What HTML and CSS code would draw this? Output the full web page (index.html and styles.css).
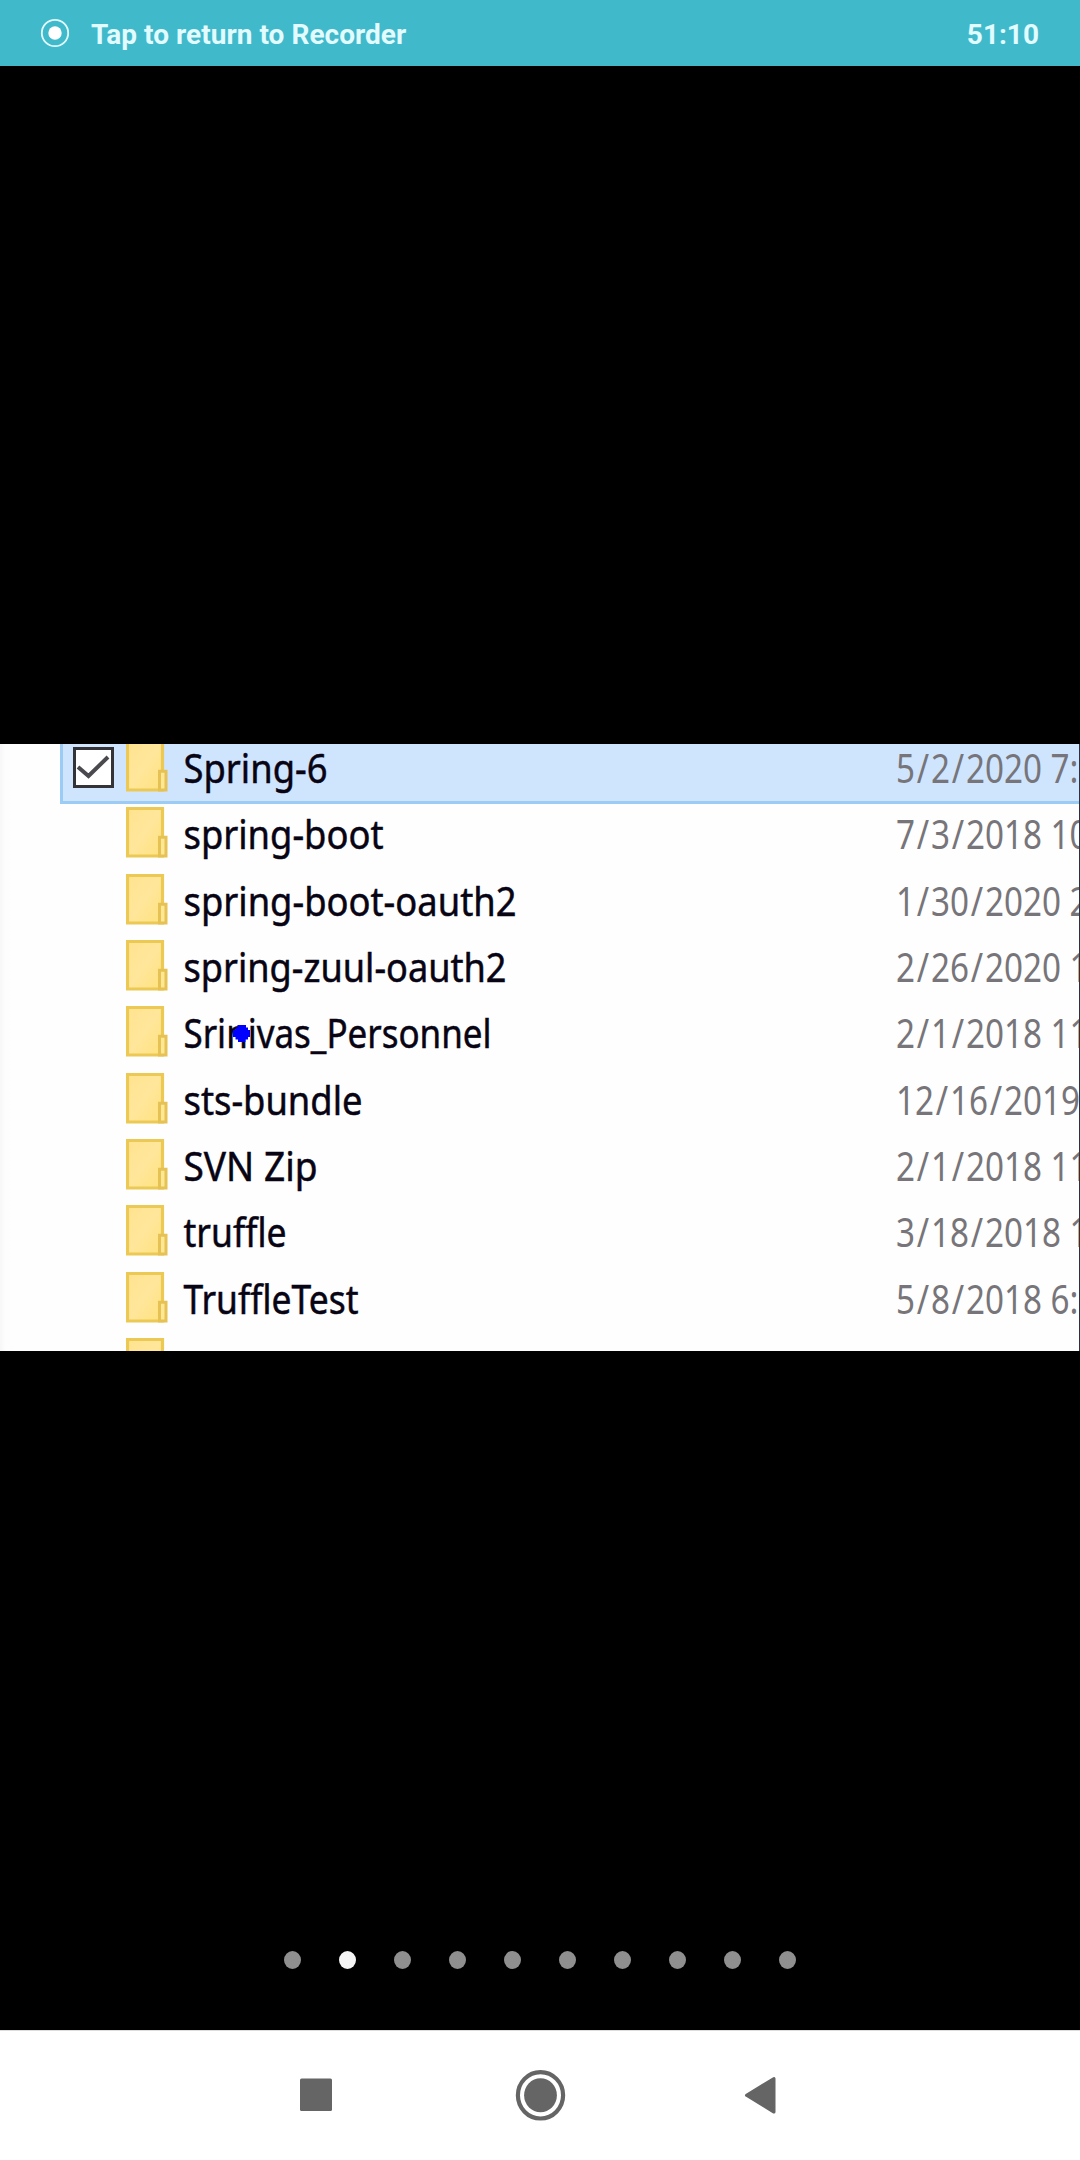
FILE: index.html
```html
<!DOCTYPE html>
<html lang="en">
<head>
<meta charset="utf-8">
<title>Recorder</title>
<link rel="stylesheet" href="styles.css">
</head>
<body>
<svg width="0" height="0" class="defs">
  <defs>
    <linearGradient id="paper" x1="0" y1="0" x2="1" y2="1"><stop offset="0" stop-color="#ffe390"/><stop offset=".5" stop-color="#ffe69a"/><stop offset="1" stop-color="#ffe27e"/></linearGradient>
    <symbol id="folder" viewBox="0 0 42 51">
      <path d="M1.500 1.500H36.500V49H1.500Z" fill="url(#paper)" stroke="#ebc954" stroke-width="3.200"/>
      <path d="M33.500 49V30.200H40V49Z" fill="#ffe794" stroke="#e6c154" stroke-width="3"/>
    </symbol>
  </defs>
</svg>
<header class="status">
  <svg class="rec" viewBox="0 0 30 30"><circle cx="15" cy="15" r="13.2" fill="none" stroke="#e2fbff" stroke-width="1.8"/><circle cx="15" cy="15" r="6.7" fill="#fff"/></svg>
  <span class="label">Tap to return to Recorder</span>
  <span class="time">51:10</span>
</header>
<main class="stage">
  <section class="photo">
    <div class="row selected">
      <svg class="check" viewBox="0 0 41 41"><rect x="1.5" y="1.5" width="38" height="38" fill="#fff" stroke="#333338" stroke-width="3"/><path d="M5 20L15.500 29L35 10" fill="none" stroke="#4a4a4e" stroke-width="4"/></svg>
      <svg class="folder"><use href="#folder"/></svg>
      <svg class="name"><text x="0" y="41" textLength="144" lengthAdjust="spacingAndGlyphs">Spring-6</text></svg>
      <span class="date">5<i>/</i>2<i>/</i>2020 7:</span>
    </div>
    <div class="row"><svg class="folder"><use href="#folder"/></svg><svg class="name"><text x="0" y="41" textLength="200" lengthAdjust="spacingAndGlyphs">spring-boot</text></svg><span class="date">7<i>/</i>3<i>/</i>2018 10</span></div>
    <div class="row"><svg class="folder"><use href="#folder"/></svg><svg class="name"><text x="0" y="41" textLength="333" lengthAdjust="spacingAndGlyphs">spring-boot-oauth2</text></svg><span class="date">1<i>/</i>30<i>/</i>2020 2</span></div>
    <div class="row"><svg class="folder"><use href="#folder"/></svg><svg class="name"><text x="0" y="41" textLength="323" lengthAdjust="spacingAndGlyphs">spring-zuul-oauth2</text></svg><span class="date">2<i>/</i>26<i>/</i>2020 1</span></div>
    <div class="row"><svg class="folder"><use href="#folder"/></svg><svg class="name"><text x="0" y="41" textLength="308" lengthAdjust="spacingAndGlyphs">Srinivas_Personnel</text></svg><span class="date">2<i>/</i>1<i>/</i>2018 11</span></div>
    <div class="row"><svg class="folder"><use href="#folder"/></svg><svg class="name"><text x="0" y="41" textLength="179" lengthAdjust="spacingAndGlyphs">sts-bundle</text></svg><span class="date">12<i>/</i>16<i>/</i>2019</span></div>
    <div class="row"><svg class="folder"><use href="#folder"/></svg><svg class="name"><text x="0" y="41" textLength="134" lengthAdjust="spacingAndGlyphs">SVN Zip</text></svg><span class="date">2<i>/</i>1<i>/</i>2018 11</span></div>
    <div class="row"><svg class="folder"><use href="#folder"/></svg><svg class="name"><text x="0" y="41" textLength="103" lengthAdjust="spacingAndGlyphs">truffle</text></svg><span class="date">3<i>/</i>18<i>/</i>2018 1</span></div>
    <div class="row"><svg class="folder"><use href="#folder"/></svg><svg class="name"><text x="0" y="41" textLength="175" lengthAdjust="spacingAndGlyphs">TruffleTest</text></svg><span class="date">5<i>/</i>8<i>/</i>2018 6:</span></div>
    <div class="row"><svg class="folder"><use href="#folder"/></svg></div>
    <svg class="pointer" viewBox="0 0 17 17"><path d="M4.500 0H13V2.500H15V5H17V12H15V14.500H12.500V17H5V14.500H2.500V12H0V5H2.500V2.500H4.500Z" fill="#00f"/></svg>
  </section>
  <div class="pager"><b></b><b class="on"></b><b></b><b></b><b></b><b></b><b></b><b></b><b></b><b></b></div>
</main>
<nav class="nav">
  <svg viewBox="0 0 52 52"><rect x="10" y="9.500" width="32" height="32.500" rx="1.500"/></svg>
  <svg viewBox="0 0 52 52"><ellipse cx="26.500" cy="26.300" rx="22.600" ry="23.200" fill="none" stroke="#656565" stroke-width="4.200"/><ellipse cx="26.500" cy="26.300" rx="16.400" ry="17"/></svg>
  <svg viewBox="0 0 52 52"><path d="M11.500 26.300L39 9.500V43.100Z" stroke="#656565" stroke-width="3" stroke-linejoin="round"/></svg>
</nav>
</body>
</html>
```
FILE: styles.css
```css
* { box-sizing: border-box; }
body {
  margin: 0;
  width: 1080px;
  height: 2160px;
  display: flex;
  flex-direction: column;
  background: #000;
  overflow: hidden;
}
svg { display: block; flex: none; }
.defs { position: absolute; }

.status {
  height: 66px;
  padding: 0 41px 0 40px;
  display: flex;
  align-items: center;
  background: #40b9cb;
  color: #e2fbff;
  font: 700 28px/66px Roboto, sans-serif;
}
.rec { width: 30px; height: 30px; }
.label { margin-left: 21px; padding-top: 4px; letter-spacing: .03px; }
.time { margin-left: auto; padding-top: 4px; }

.stage {
  height: 1964px;
  padding-top: 678px;
  display: flex;
  flex-direction: column;
}
.photo {
  position: relative;
  height: 607px;
  overflow: hidden;
  background: linear-gradient(90deg, #f8f6f8, #fdfdfd 5px, #fefefe 14px, #fefefe);
  border-right: 1px solid #263442;
}
.row {
  height: 66.35px;
  margin-left: 60px;
  padding-left: 66px;
  display: flex;
}
.selected {
  height: 60px;
  padding-left: 10px;
  background: #cfe5fe;
  border-left: 3px solid #9ccbf4;
  border-bottom: 3px solid #9ccbf4;
}
.selected + .row { margin-top: 3.3px; }
.selected .folder, .selected .name, .selected .date { margin-top: -3px; }
.check { width: 41px; height: 41px; margin: 3px 12px 0 0; }
.folder { width: 42px; height: 51px; }
.name { width: 713px; height: 60px; margin-left: 15px; overflow: visible; }
.name text { font: 400 40px "Noto Sans", sans-serif; fill: #080414; stroke: #080414; stroke-width: .5px; transform: translate(.5px, .8px); }
.date {
  width: 240px;
  flex: none;
  white-space: pre;
  transform: scaleX(.83);
  transform-origin: left;
  font: 400 40px/54px "Noto Sans", sans-serif;
  color: #77757a;
}
.date i { font-style: normal; padding: 0 2.2px; }
.pointer { position: absolute; left: 233px; top: 281px; width: 17px; height: 17px; }

.pager {
  margin-top: 600px;
  display: flex;
  justify-content: center;
  gap: 38px;
}
.pager b { width: 17px; height: 18px; border-radius: 50%; background: #8f8f8f; }
.pager .on { background: #f5f5f5; }

.nav {
  height: 130px;
  padding: 38px 252px 0 290px;
  border-top: 1px solid #ddd;
  display: flex;
  background: #fff;
  fill: #656565;
}
.nav svg { width: 52px; height: 52px; }
.nav svg + svg { margin-left: 172px; }
.nav svg + svg + svg { margin-left: 169px; }
```
